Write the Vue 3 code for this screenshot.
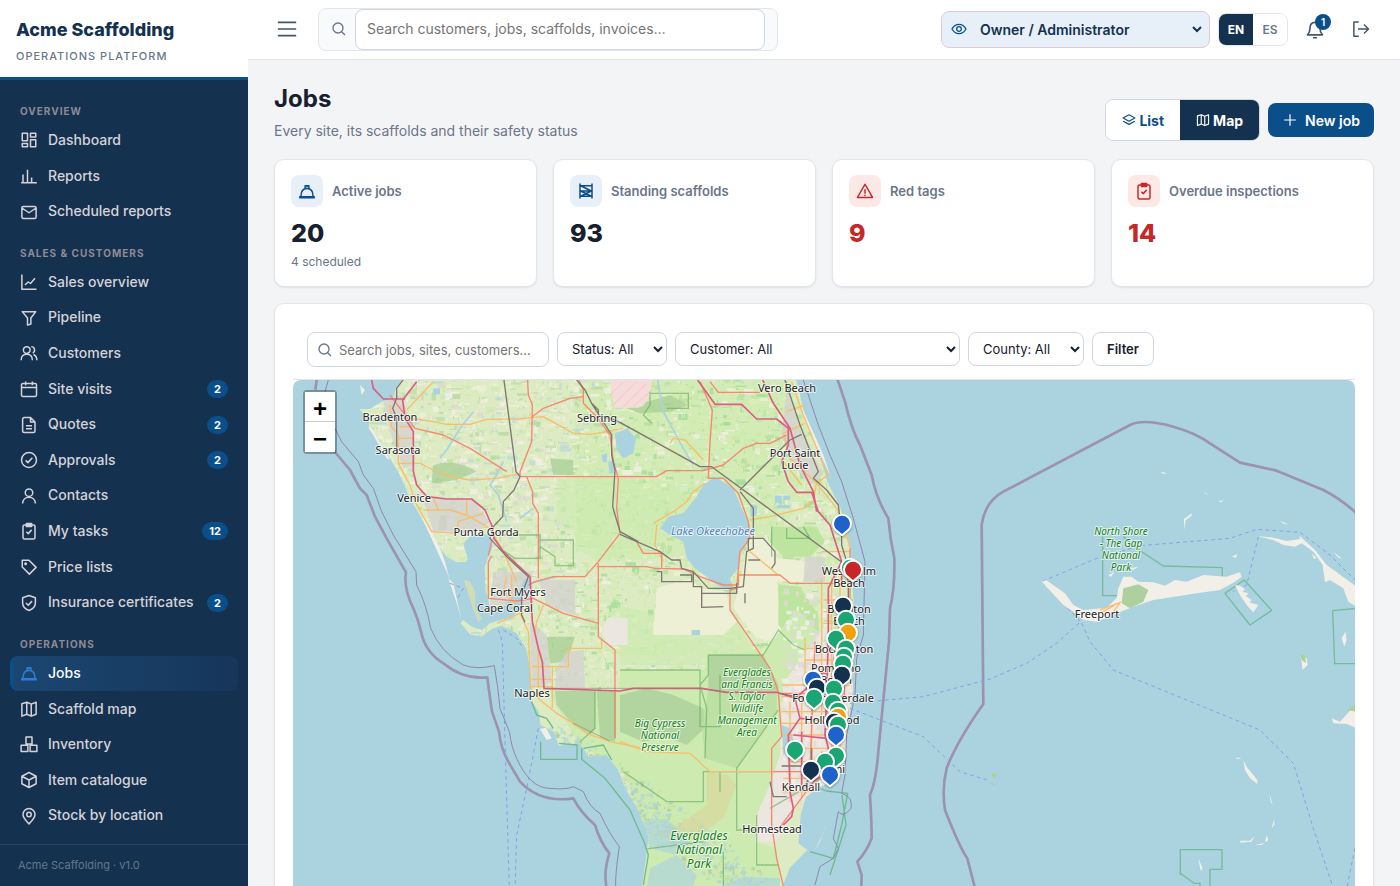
<script setup>
const icons = {
  dashboard: 'M3 3h7v10H3zM14 3h7v5h-7zM3 16.500h7V21H3zM14 11.500h7V21h-7z',
  bars: 'M1.500 21h21M4 21V10M10 21V3.500M15.500 21v-7M20 21v-1',
  mail: 'M4.500 4.500h15a2 2 0 0 1 2 2v12a2 2 0 0 1-2 2h-15a2 2 0 0 1-2-2v-12a2 2 0 0 1 2-2zM3 7l9 6 9-6',
  trend: 'M2.500 2v19.500H22M6.500 16l4.500-4 3 2L20 7',
  funnel: 'M3 3.500h18L14.500 12v8L10 21.500V12z',
  users: 'M9 12.500a4.500 4.500 0 1 0 0-9 4.500 4.500 0 0 0 0 9zM1.500 21.500c0-5 3-8 7.500-8s7.500 3 7.500 8M15 3.500a4.500 4.500 0 0 1 2 8.500M18 14c3 1.500 4.500 4 4.500 7.500',
  calendar: 'M4 4.500h16a2 2 0 0 1 2 2V20a2 2 0 0 1-2 2H4a2 2 0 0 1-2-2V6.500a2 2 0 0 1 2-2zM2 10h20M7.500 2v5M16.500 2v5',
  file: 'M5.500 2H14l6 6v12a2 2 0 0 1-2 2H5.500a2 2 0 0 1-2-2V4a2 2 0 0 1 2-2zM14 2v6h6M8 13h8M8 17h8',
  check: 'M12 22a10 10 0 1 0 0-20 10 10 0 0 0 0 20zM7.500 12.500l3 3 6-6.500',
  user: 'M12 12.500a5 5 0 1 0 0-10 5 5 0 0 0 0 10zM3.500 22c0-5 3.500-8.500 8.500-8.500s8.500 3.500 8.500 8.500',
  task: 'M6 4h12a2 2 0 0 1 2 2v14.500a2 2 0 0 1-2 2H6a2 2 0 0 1-2-2V6a2 2 0 0 1 2-2zM8.500 2h7v4h-7zM9.500 4h5M8.500 13l2.500 2.500 4.500-5',
  tag: 'M3 3h9l9.500 9.500-9 9L3 12zM7.500 6.500a1 1 0 1 0 0 2 1 1 0 0 0 0-2z',
  shield: 'M12 2l8.500 3v7c0 5-3.500 8-8.500 10-5-2-8.500-5-8.500-10V5zM8 12l3 3 5-5.500',
  hat: 'M1.500 19.500h21M1.500 21h21M4 18.500c0-6 3-10 8-10s8 4 8 10M9.500 8.500V5h5v3.500M11 6h2',
  map: 'M2.500 5L9 3l6 2.500L21.500 3v16L15 21.500 9 19l-6.500 2.500zM9 3v16M15 5.500v16',
  boxes: 'M8 2.500h8V12H8zM1.500 13.500h9V22h-9zM13.500 13.500h9V22h-9z',
  cube: 'M12 2l9.500 5v10L12 22l-9.500-5V7zM2.500 7l9.500 5 9.500-5M12 12v10',
  pin: 'M12 22.500c-4-4-8-8-8-12.500a8 8 0 0 1 16 0c0 4.500-4 8.500-8 12.500zM12 7a3 3 0 1 0 0 6 3 3 0 0 0 0-6z',
  chart: 'M3 2.500V21h19M7 17v-5M12 17V8M17 17v-7',
  search: 'M10.500 18a7.500 7.500 0 1 0 0-15 7.500 7.500 0 0 0 0 15zM16 16l5 5',
  eye: 'M1.500 12c2.500-4.500 6-7 10.500-7s8 2.500 10.500 7c-2.500 4.500-6 7-10.500 7s-8-2.500-10.500-7zM12 8.500a3.500 3.500 0 1 0 0 7 3.500 3.500 0 0 0 0-7z',
  bell: 'M3 19h18c-2-2-3-4-3-8 0-4-2-7-6-7s-6 3-6 7c0 4-1 6-3 8zM9.500 22.500h5',
  exit: 'M9 2.500H2.500v19H9M8 12h14M16 6l6 6-6 6',
  layers: 'M12 3l10 5.500L12 14 2 8.500zM2 14l10 5.500L22 14',
  plus: 'M12 2v20M2 12h20',
  scaffold: 'M4 2v20M20 2v20M4 5h16M4 12h16M4 19h16M5 5l14 7M19 12L5 19M5 12l14 7',
  alert: 'M12 3l10 17.500H2zM12 9.500v6M12 17v1.500',
  menu: 'M1 4h22M1 12h22M1 20h22',
}
const sections = [
  { title: 'Overview', items: [['Dashboard', 'dashboard'], ['Reports', 'bars'], ['Scheduled reports', 'mail']] },
  { title: 'Sales & Customers', items: [['Sales overview', 'trend'], ['Pipeline', 'funnel'], ['Customers', 'users'], ['Site visits', 'calendar', 2], ['Quotes', 'file', 2], ['Approvals', 'check', 2], ['Contacts', 'user'], ['My tasks', 'task', 12], ['Price lists', 'tag'], ['Insurance certificates', 'shield', 2]] },
  { title: 'Operations', items: [['Jobs', 'hat'], ['Scaffold map', 'map'], ['Inventory', 'boxes'], ['Item catalogue', 'cube'], ['Stock by location', 'pin'], ['', 'chart']] },
]
const stats = [
  { label: 'Active jobs', value: '20', sub: '4 scheduled', icon: 'hat' },
  { label: 'Standing scaffolds', value: '93', icon: 'scaffold' },
  { label: 'Red tags', value: '9', icon: 'alert', red: true },
  { label: 'Overdue inspections', value: '14', icon: 'task', red: true },
]
const green = '#1aa672', blue = '#1f62c9', navy = '#14314f', amber = '#f0a30a', red = '#c62828'
const pins = [
  [842, 524, blue], [850, 568, green], [853, 570, red], [843, 606, navy], [846, 620, green], [848, 633, amber],
  [836, 639, green], [846, 649, green], [844, 657, green], [843, 664, green], [842, 675, navy], [813, 680, blue],
  [817, 688, navy], [834, 689, green], [814, 698, green], [833, 703, green], [838, 711, green], [838, 717, amber],
  [834, 722, navy], [838, 725, green], [836, 735, blue], [795, 750, green], [836, 756, green], [825, 762, green],
  [811, 770, navy], [830, 775, blue],
]
const places = [
  [['Bradenton'], 390, 421], [['Sarasota'], 398, 454], [['Venice'], 414, 502], [['Punta Gorda'], 486, 536],
  [['Fort Myers'], 518, 596], [['Cape Coral'], 505, 612], [['Naples'], 532, 697], [['Sebring'], 597, 422],
  [['Vero Beach'], 787, 392], [['Port Saint', 'Lucie'], 795, 457], [['West Palm', 'Beach'], 849, 575],
  [['Boynton', 'Beach'], 849, 613], [['Boca Raton'], 844, 653],
  [['Pompano', 'Beach'], 836, 672], [['Fort Lauderdale'], 833, 702], [['Hollywood'], 832, 724],
  [['Miami'], 829, 773], [['Kendall'], 801, 791], [['Homestead'], 772, 833], [['Freeport'], 1097, 618],
]
const parks = [
  [['Everglades', 'and Francis', 'S. Taylor', 'Wildlife', 'Management', 'Area'], 747, 676],
  [['Big Cypress', 'National', 'Preserve'], 660, 727],
  [['North Shore', '- The Gap', 'National', 'Park'], 1121, 535],
]

let seed = 20
const rnd = () => (seed = (seed * 16807) % 2147483647) / 2147483647
const pick = (list) => list[Math.floor(rnd() * list.length)]
const west = ['#f2efe9', '#eef0d5', '#cdebb0', '#f2efe9', '#eef0d5', '#c2dfa8', '#dcdad2', '#e4ecc6', '#b9d8a6', '#bcdcd6']
const east = ['#cdebb0', '#cdebb0', '#eef0d5', '#d9efb8', '#b8e09c', '#c9eaa5', '#f2efe9', '#a4dd9b', '#d6e8bd']
const patches = []
for (let i = 0; i < 7500; i++) {
  const x = Math.round(220 + rnd() * 1480)
  const y = Math.round(rnd() * 950)
  const s = rnd()
  const nearWest = x + y * 0.35 < 850 + rnd() * 260
  patches.push([x, y, Math.round(3 + s * s * s * 30), Math.round(3 + rnd() * rnd() * 20), pick(nearWest ? west : east)])
}
const suburbs = []
for (let i = 0; i < 320; i++) {
  suburbs.push([Math.round(1475 + rnd() * 210), Math.round(640 + rnd() * 640), Math.round(5 + rnd() * 16), Math.round(5 + rnd() * 16), rnd() > 0.5 ? '#dddbd9' : '#f2efe9'])
}
const marsh = []
for (let i = 0; i < 800; i++) {
  const t = rnd()
  marsh.push([Math.round(740 + t * 620 + rnd() * 90), Math.round(1030 + t * 470 + rnd() * 110), Math.round(3 + rnd() * 11), Math.round(3 + rnd() * 9), pick(['#aad3df', '#a6cf9a', '#aad3df', '#d6dfa0'])])
}
</script>

<template>
  <div class="shell">
    <aside class="sidebar">
      <div class="brand">
        <strong>Acme Scaffolding</strong>
        <span>Operations Platform</span>
      </div>
      <nav aria-label="Main">
        <section v-for="s in sections" :key="s.title">
          <h2>{{ s.title }}</h2>
          <a v-for="it in s.items" :key="it[0]" href="#" :class="{ active: it[0] === 'Jobs' }" :aria-label="it[0] || 'More'">
            <svg class="ico" viewBox="0 0 24 24" aria-hidden="true"><path :d="icons[it[1]]" /></svg>
            <span>{{ it[0] }}</span>
            <b v-if="it[2]">{{ it[2] }}</b>
          </a>
        </section>
      </nav>
      <footer>Acme Scaffolding · v1.0</footer>
    </aside>

    <div class="page">
      <header class="topbar">
        <button class="plain" aria-label="Toggle menu">
          <svg class="ico20" viewBox="0 0 24 24"><path :d="icons.menu" /></svg>
        </button>
        <div class="search">
          <svg class="ico16" viewBox="0 0 24 24" aria-hidden="true"><path :d="icons.search" /></svg>
          <input type="search" aria-label="Search" placeholder="Search customers, jobs, scaffolds, invoices…" />
        </div>
        <div class="tools">
          <div class="role">
            <svg class="ico16" viewBox="0 0 24 24" aria-hidden="true"><path :d="icons.eye" /></svg>
            <select aria-label="View as role"><option>Owner / Administrator</option></select>
          </div>
          <div class="lang">
            <button class="on">EN</button><button>ES</button>
          </div>
          <button class="plain bell" aria-label="Notifications">
            <svg class="ico20" viewBox="0 0 24 24"><path :d="icons.bell" /></svg>
            <span>1</span>
          </button>
          <button class="plain" aria-label="Sign out">
            <svg class="ico18" viewBox="0 0 24 24"><path :d="icons.exit" /></svg>
          </button>
        </div>
      </header>

      <main>
        <div class="heading">
          <div>
            <h1>Jobs</h1>
            <p>Every site, its scaffolds and their safety status</p>
          </div>
          <div class="actions">
            <div class="toggle">
              <button><svg class="ico14" viewBox="0 0 24 24" aria-hidden="true"><path :d="icons.layers" /></svg>List</button>
              <button class="on"><svg class="ico14" viewBox="0 0 24 24" aria-hidden="true"><path :d="icons.map" /></svg>Map</button>
            </div>
            <button class="primary"><svg class="ico14" viewBox="0 0 24 24" aria-hidden="true"><path :d="icons.plus" /></svg>New job</button>
          </div>
        </div>

        <div class="stats">
          <article v-for="s in stats" :key="s.label" :class="{ red: s.red }">
            <div class="stat-head">
              <i><svg class="ico18" viewBox="0 0 24 24" aria-hidden="true"><path :d="icons[s.icon]" /></svg></i>
              <span>{{ s.label }}</span>
            </div>
            <strong>{{ s.value }}</strong>
            <small v-if="s.sub">{{ s.sub }}</small>
          </article>
        </div>

        <div class="panel">
          <form class="filters" @submit.prevent>
            <div class="find">
              <svg class="ico16" viewBox="0 0 24 24" aria-hidden="true"><path :d="icons.search" /></svg>
              <input type="text" aria-label="Search jobs" placeholder="Search jobs, sites, customers…" />
            </div>
            <select class="w-status" aria-label="Status"><option>Status: All</option></select>
            <select class="w-customer" aria-label="Customer"><option>Customer: All</option></select>
            <select class="w-county" aria-label="County"><option>County: All</option></select>
            <button>Filter</button>
          </form>

          <div class="map">
            <svg class="canvas" viewBox="293 380 1062 560" role="img" aria-label="Map of job sites in South Florida">
              <defs>
                <clipPath id="land">
                  <path d="M345 0L318 40 308 70 275 80 240 102 208 102 238 135 236 162 262 190 300 250 330 300 360 370 395 430 430 495 470 545 500 562 535 560 520 505 548 478 600 478 608 515 584 575 586 640 598 690 632 705 690 640 702 610 722 615 700 660 690 705 665 725 600 745 575 765 545 755 520 735 512 745 540 778 575 785 605 762 635 752 680 775 708 820 720 880 722 975 745 1008 752 1050 792 1070 806 1112 870 1105 895 1145 950 1140 985 1185 1005 1240 1042 1300 1076 1385 1068 1450 1055 1540 1040 1800H1460L1478 1533 1500 1478 1552 1425 1525 1405 1532 1320 1548 1265 1590 1235 1640 1215 1662 1170 1672 1070 1686 970 1692 860 1698 770 1686 620 1680 510 1652 400 1612 320 1580 210 1542 110 1515 0z" />
                </clipPath>
              </defs>
              <rect x="293" y="380" width="1062" height="560" fill="#aad3df" />
              <g transform="translate(290 375) scale(.33333)">
                <g clip-path="url(#land)">
                  <rect width="1750" height="1800" fill="#dcebc2" />
                  <path d="M850 0H1500L1600 330 1400 520 1000 560 860 500z" fill="#d3ebb5" />
                  <rect v-for="(p, i) in patches" :key="i" :x="p[0]" :y="p[1]" :width="p[2]" :height="p[3]" :fill="p[4]" opacity=".8" />
                  <path d="M800 310H1060V340L1250 325 1110 430 1130 480 1090 520 1000 540 930 560 860 520 850 460 800 440z" fill="#cdebb0" opacity=".65" />
                  <path d="M990 690L1090 720H1330L1420 870H990z" fill="#cdebb0" opacity=".7" />
                  <path d="M1100 640L1200 610 1230 640 1310 650 1320 710 1340 740 1300 780H1090zM1380 480L1440 500 1460 550 1560 560 1540 620 1460 620 1470 700 1500 760 1460 800 1400 790 1330 700 1350 620zM1090 740H1290V780H1090z" fill="#eef0d5" />
                  <path d="M1445 455H1580L1605 500 1560 545 1480 545 1440 500zM1465 628L1530 635 1585 720 1588 790 1530 820 1465 750z" fill="#bde59f" />
                  <path d="M770 945H990V885H1250V835H1420L1520 700 1590 780 1545 830 1545 925 1470 985V1145L1445 1220 1440 1300 1400 1360 1395 1400 1460 1420 1500 1800H1030L1070 1440 1075 1385 1000 1190 870 1110z" fill="#cdebb0" />
                  <path d="M795 948H915V1060L900 1080 850 1050 800 990zM920 948H975V1100L930 1090zM1255 840H1420L1465 930V952H1310L1255 940zM990 960L1070 940 1150 960 1240 1000 1245 1060 1190 1110 1130 1085 1060 1100 990 1070z" fill="#add19e" opacity=".85" />
                  <path d="M1255 945H1460V1010L1340 1180 1245 1150 1235 1050z" fill="#b9dda3" opacity=".8" />
                  <path d="M770 785H855L830 860 780 865zM780 250L850 255V300H790zM430 270Q500 250 560 290L500 315 425 325zM450 420H470V465H445zM1010 100L1140 60 1195 90 1140 110 1050 115z" fill="#a9cf95" opacity=".75" />
                  <path d="M960 15H1085L1082 60 1060 92 1045 98H975L965 50z" fill="#f5dcda" />
                  <path d="M970 90L1040 20M1000 95L1070 25M1030 95L1085 45M960 60L1000 20" stroke="#eeb9b6" stroke-width="2" />
                  <path d="M280 80L330 60 370 150 375 270 340 280 300 170zM400 375L545 372 600 440 560 470 430 470zM610 590L725 590 730 690 600 690zM745 615H855V720L770 690zM720 740L770 780 785 920 725 940zM800 880L830 830 880 825 885 940 795 940zM1490 40L1530 160 1600 300 1560 330 1500 260 1475 180zM1545 545H1605V620H1540z" fill="#d5d2d0" opacity=".8" />
                  <path d="M950 730H1013V810H960L935 780zM1480 925L1590 770 1690 780 1670 1160 1590 1240 1520 1290 1460 1400 1400 1400 1400 1320 1440 1230 1470 1140z" fill="#ebe6df" />
                  <rect v-for="(p, i) in suburbs" :key="'s' + i" :x="p[0]" :y="p[1]" :width="p[2]" :height="p[3]" :fill="p[4]" opacity=".8" />
                  <rect v-for="(p, i) in marsh" :key="'m' + i" :x="p[0]" :y="p[1]" :width="p[2]" :height="p[3]" :fill="p[4]" opacity=".6" />
                  <path d="M1250 1190L1310 1200 1340 1230 1300 1330 1240 1370 1200 1400 1080 1380 1180 1340 1250 1290z" fill="#dbd49a" opacity=".6" />
                  <path d="M1060 1340L1130 1330 1200 1400 1160 1440 1080 1420zM1080 1480L1160 1440 1220 1500 1190 1600 1060 1600zM1300 1530L1360 1505 1470 1510V1600H1290z" fill="#aad3df" opacity=".65" />
                  <g fill="none" stroke="#5aa45a" stroke-opacity=".55" stroke-width="4">
                    <path d="M990 885H1230V1055H1290V900M1255 840H1420M1255 840V900L1230 930 1250 1000 1245 1150M1465 1005L1340 1180V1365H1400M1000 1190L1130 1280H1240V1190H1445M1290 1190V1250M1400 1320V1470H1465M1300 1430V1540L1200 1560M1620 1195L1440 1300M1445 455V545M1490 460V490H1560L1540 455M1420 840L1465 765 1510 810 1545 825" />
                    <path d="M625 480H750V550H675L630 520M745 495H850V572H795V545L750 515M1080 50V90L1060 120 1085 145M1080 55H1195V100H1130M915 945V1060L870 1100M975 945V1090M1005 1430L1240 1400" />
                  </g>
                </g>
                <g fill="#aad3df">
                  <path d="M1240 330L1275 305 1330 340 1355 400 1378 450 1375 490 1350 530 1345 580 1320 610 1330 640 1290 635 1255 610 1215 580 1190 550 1180 500 1140 480 1110 460 1135 425 1180 415 1220 365z" />
                  <path d="M975 175L1010 160 1038 190 1030 235 1000 250 980 225zM935 240L952 235 950 262 938 260zM955 260L975 255 970 295 958 297zM430 40H450V58H428zM1455 362H1475V384H1455zM1480 362H1500V375H1480zM1460 390H1500V400H1460zM1380 388L1402 392 1400 420 1382 425zM1205 765H1230V780H1205zM1475 1050L1500 1060 1515 1110 1480 1140z" />
                </g>
                <path d="M650 440L625 360 600 330 620 300 640 260M450 250L470 225 510 160 550 110M530 560L560 520 590 510 612 490M700 660L720 625 800 605M690 430L730 400M1100 0L1120 110 1180 220 1210 270" fill="none" stroke="#aad3df" stroke-width="5" />
                <path d="M522 615L540 620 556 650 555 700 575 730 565 742 545 690z" fill="#cfdcb8" />
                <path d="M235 155L245 160 300 255 290 250zM395 425L410 440 430 480 450 520 465 560 478 610 470 590 440 525zM475 610L490 625 500 670 515 735 505 700zM210 30L225 45 215 60zM1520 70L1535 95 1560 150 1600 240 1622 305 1592 240zM750 1062L768 1058 785 1090 770 1095zM1610 1345L1600 1375 1575 1425 1590 1400z" fill="#f2efe9" />

                <g fill="none" stroke-linejoin="round">
                  <g stroke="#f9bd6b" stroke-width="4">
                    <path d="M350 105L430 20M345 130L380 132 430 140 470 148H540L590 133 680 132 760 125 850 175 900 178 950 170 1000 160M325 265H390L430 285 480 305 540 315 620 310 690 295M300 90L305 155 325 180 325 265 360 330 375 380 425 470 500 475 505 440 580 415M400 405H480L530 420 600 460 640 530 680 620M430 370L445 405M530 375V420M330 155H375M325 190H370M650 605L640 650 680 690M620 745L690 715 715 770 722 940 750 975 800 1015 850 1045 890 1075 960 1100 1050 1118M725 875H835V820H935V790M787 875V1000M725 913H787M725 935H787M745 810V940M760 690L740 740 735 770M665 600V690" />
                    <path d="M1090 445L1150 410 1190 380 1210 350 1245 325M1140 205L1150 190 1185 195 1240 255M1380 435L1440 425 1540 400 1570 380 1580 320M1505 20L1540 120 1600 270 1615 300 1580 325 1640 400 1670 480 1680 520M1380 530L1465 600M1545 90L1490 110M1545 145L1480 175 1500 250 1580 325M1480 260L1535 330M1100 450L1095 510 1120 560M990 1100L1070 1130 1200 1135 1260 1190H1640" />
                    <path d="M1595 530H1680M1595 610V1030M1625 610V1180M1650 610V1130M1600 675H1690M1600 710H1685M1600 745H1685M1545 820H1680M1545 855H1680M1475 930H1680M1475 965H1680M1475 1010H1670M1475 1045H1670M1475 1080H1665M1475 1120H1665M1500 980V1280M1535 950V1270M1565 940V1220M1500 1160H1650M1480 1210H1600M1475 1250H1570M1545 790V930" />
                  </g>
                  <g stroke="#fa8670" stroke-width="4">
                    <path d="M712 0L715 60 727 90 725 200 690 290 690 305H1100L1130 287H1240L1300 270 1360 220 1400 205 1440 205 1490 180M727 125L760 100 840 70 880 65M860 0L880 45V85L920 125 960 180 970 260 985 310 980 400 990 475 925 560 885 605H790L735 620 715 630M300 60L375 160 460 180 540 220 650 290M710 305L728 350V385L745 415V610M595 540L605 500M605 545L595 560V670L680 678 730 670 820 715 925 745V785L975 825V1090M920 575H1070L1095 580 1180 582 1230 605 1300 630H1345V600H1470L1500 625H1640M1040 500L1060 535H1115V580M1230 20L1267 105 1260 200 1255 310 1300 310 1345 355 1375 440 1380 490 1350 530 1340 640 1320 645V705L1375 785 1440 880 1465 950 1475 1085 1445 1120V1350L1460 1450 1480 1533M1260 20L1285 52H1410M1450 1190H1540M1475 955H1580M925 565V745" />
                    <path d="M1680 520V700L1675 800 1665 900 1660 1060 1600 1180 1460 1370M1575 800L1560 1180" />
                  </g>
                  <g stroke="#dd5d82" stroke-width="5">
                    <path d="M245 15L250 40 280 72H345M380 20L338 75 345 130 370 170V290L380 330 410 365 470 372H545L585 405 605 450 612 490 640 530 720 605 727 740 745 820 757 860 762 940 990 948 1030 940H1235L1310 952H1460L1515 970 1530 1030 1495 1080 1500 1250 1510 1300 1505 1325 1480 1350" />
                    <path d="M1223 15L1275 88H1355L1400 132H1460L1495 160V210L1475 260 1495 320 1520 352H1565L1585 410 1620 450 1655 560 1615 640V780L1610 960 1605 1080 1630 1180 1570 1220M1418 15L1450 85 1500 160 1530 270 1570 350 1580 410M1655 560V620M1515 970L1550 940 1580 895H1615M1530 1030L1590 1035M1510 1080L1610 1090M1535 1070V1230" />
                  </g>
                  <g stroke="#807673" stroke-width="4">
                    <path d="M350 0L320 40V70L308 100 320 130V240M640 0L678 290 690 305 672 345 640 380 638 425 610 455 600 490 655 550 715 605 695 660V720L705 742M860 15L885 45 905 85 965 180 965 240 975 285 968 395 990 470 1045 500M905 85L925 105V120L975 135 1040 170M990 142L1230 275H1265L1660 565M1350 345L1500 195 1535 178M1485 15L1530 150 1585 290 1570 310 1610 345 1645 390 1655 475 1655 510 1670 560 1675 640V800L1650 960 1640 1100 1530 1250M990 478L1110 530 1145 555H1170L1175 580 1210 590V635H1235V697L1300 695M1210 590L1255 640H1320L1360 635 1370 530 1390 520V400L1350 350M1100 590H1115V620H1205V600H1170M1235 655H1340V625M1375 525H1375V490H1420L1455 530V565L1445 580M1375 555H1410M1365 655V685M1470 955L1545 970M1475 1173H1595V1130M1440 1220L1450 1265H1490M1565 1120V1180" />
                  </g>
                  <path d="M765 940H1230L1310 952H1410M850 1045L960 1098" stroke="#8c7f6d" stroke-width="3" opacity=".6" />
                  <path d="M752 1100V1153H861V1110L807 1105M875 1120V1153L945 1210 1020 1305 1062 1400 1075 1440 1060 1530M725 980L740 1020 770 1030 790 1060M880 1120L940 1110 965 1155" stroke="#6fb98f" stroke-width="4" />
                  <path d="M1590 1240L1610 1248 1673 1255 1655 1350 1630 1450 1560 1430M1656 1260L1668 1350 1620 1500" stroke="#6fb98f" stroke-width="4" />

                  <g stroke="#9b8fae" stroke-width="8" opacity=".95">
                    <path d="M82 0L76 45M130 225L180 285 210 340 230 360 255 425 290 490 348 592Q340 640 370 700 385 735 393 770 405 830 460 865 520 915 592 907 600 970 606 1010L627 1070Q632 1120 655 1160L690 1220Q750 1285 850 1270 870 1310 915 1350 930 1400 958 1435 940 1490 950 1540" />
                    <path d="M1638 0L1665 80Q1685 165 1710 210L1745 300Q1758 370 1795 430 1800 490 1813 550 1815 640 1800 700L1797 800 1765 1130Q1758 1220 1740 1260 1745 1340 1745 1390 1730 1430 1702 1460L1715 1500 1713 1560" />
                    <path d="M2055 1540L2032 1450Q2010 1420 1965 1305 1955 1240 1970 1180 2000 1100 2080 987L2075 450Q2085 380 2140 350L2520 150Q2560 130 2650 155 2720 175 2760 205L2850 263 2960 287 3100 345Q3150 370 3200 415" />
                  </g>
                  <g stroke="#8f86ae" stroke-width="3">
                    <path d="M115 15L105 50M135 160L155 200 205 260 220 300 250 340 275 410 310 480 378 590 380 630Q410 690 422 760 450 830 520 870 560 885 613 872 625 940 630 1000L658 1070Q665 1120 680 1150 720 1240 780 1240 830 1245 850 1235L880 1250Q900 1300 930 1315 960 1380 988 1415 975 1500 977 1540M1540 15L1585 150 1620 240 1655 320 1690 430 1725 560 1720 780 1700 850 1695 960 1670 1080 1665 1200 1655 1255Q1690 1265 1683 1300 1660 1330 1645 1310L1630 1390 1645 1420 1630 1450 1590 1475 1575 1530" />
                  </g>
                  <g stroke="#849fe9" stroke-width="3" stroke-dasharray="11 10">
                    <path d="M625 765L637 800 645 1100 658 1540M745 1060L710 1240 680 1380 675 1540M480 625L520 640 500 675M640 765L680 790 700 820M1680 985L1900 965 2100 912 2210 865 2300 805 2372 740 2255 620 2420 550 2550 512 2820 490 2900 463 3030 472 3120 540 3200 620M1680 1000L1900 1085 2010 1190 2090 1215M2375 745L2400 800 2470 885 2910 1065 3010 1165 3070 1360 3130 1540M3195 1420L3170 1540M2905 485L2870 630 2830 650" />
                  </g>
                  <g stroke="#76bb9b" stroke-width="4">
                    <path d="M2438 485V662H2485L2490 645 2510 626H2580L2620 635H2700L2720 624 2797 628V578L2620 573 2540 520 2500 485M2805 655L2863 615 2945 706 2880 750zM3200 700L3128 707 3134 866H3200M2671 1500V1424H2796V1483H2760V1540M2671 1495L2712 1525H2730V1540" />
                  </g>
                </g>
                <g fill="#f2efe9">
                  <path d="M2255 620L2268 615 2325 655 2350 690 2380 705 2450 698 2480 668 2485 640 2500 605 2525 605 2545 620 2590 622 2625 632 2655 615 2690 620 2740 600 2810 605 2850 592 2855 605 2835 620 2790 645 2720 655 2590 675 2530 695 2480 715 2420 740 2380 735 2350 710 2320 690z" />
                  <path d="M2835 630L2850 632 2865 642 2858 650 2875 655 2868 664 2885 675 2878 682 2905 690 2890 712 2870 690 2850 660zM2900 483L2950 488 2990 498 3030 492 3028 482 3075 525 3110 570 3165 610 3200 635V695L3175 680 3160 640 3120 615 3105 622 3098 570 3070 530 3035 505 3015 515 2980 510 2950 495zM2683 465L2682 432 2705 415V422L2687 436zM2612 290L2632 295 2620 297zM2742 350L2758 362 2745 355zM2785 377H2803L2790 382zM2970 438L2995 448 2980 446zM3125 1030L3150 1040 3200 985V1060L3170 1047 3130 1045zM2860 1155L2870 1175 2890 1200 2902 1215V1227L2880 1210 2865 1185zM2835 1148H2855L2845 1152zM2850 1397H2880L2893 1383 2885 1400 2852 1403zM2895 1410L2925 1403 2930 1380 2935 1395 2915 1410zM2945 1360L2953 1330V1350zM2938 1255L2948 1290 2942 1280zM2725 1450L2738 1480 2732 1488zM3030 840L3050 850 3053 870 3038 885 3035 860zM3155 790L3166 770 3170 795 3163 815zM2825 545L2842 537 2838 548zM3065 535L3080 550 3072 552zM3130 530L3155 550 3145 548zM2455 600L2475 590 2462 606zM2520 580L2545 575 2530 585z" />
                  <path d="M2500 640L2545 628 2575 645 2560 680 2520 700 2495 685zM3030 840H3045L3048 865 3035 855zM3170 1005L3200 985V1010zM2110 1190L2122 1200 2112 1210 2105 1200zM2090 1220L2118 1227 2110 1230z" fill="#add19e" />
                  <path d="M2430 705L2490 683 2470 710M2430 715L2475 690" fill="none" stroke="#f9bd6b" stroke-width="4" />
                </g>
              </g>

              <g class="place">
                <text v-for="(p, i) in places" :key="i">
                  <tspan v-for="(l, j) in p[0]" :key="j" :x="p[1]" :y="p[2] + j * 12">{{ l }}</tspan>
                </text>
              </g>
              <text class="lake" x="713" y="535">Lake Okeechobee</text>
              <g class="park">
                <text v-for="(p, i) in parks" :key="i">
                  <tspan v-for="(l, j) in p[0]" :key="j" :x="p[1]" :y="p[2] + j * 12">{{ l }}</tspan>
                </text>
                <text class="big"><tspan x="699" y="840">Everglades</tspan><tspan x="699" y="854">National</tspan><tspan x="699" y="868">Park</tspan></text>
              </g>
              <g class="pins">
                <path v-for="(p, i) in pins" :key="i" :transform="`translate(${p[0]} ${p[1]})`" :fill="p[2]" d="M-6 5A8 8 0 1 1 6 5L0 10z" />
              </g>
            </svg>
            <div class="zoom">
              <button aria-label="Zoom in">+</button>
              <button aria-label="Zoom out">−</button>
            </div>
          </div>
        </div>
      </main>
    </div>
  </div>
</template>

<style>
body { margin: 0; background: #f3f4f6; }
</style>

<style scoped>
* { box-sizing: border-box; }
.shell { display: grid; grid-template-columns: 248px minmax(0, 1fr); height: 100vh; overflow: hidden; font-family: Inter, "Liberation Sans", sans-serif; font-size: 14px; color: #16202e; }
button, input, select { font-family: inherit; }
button { cursor: pointer; }
svg { flex: none; display: block; }
.ico, .ico14, .ico16, .ico18, .ico20 { fill: none; stroke: currentColor; stroke-width: 2; stroke-linejoin: round; }
.ico, .ico18 { width: 18px; height: 18px; }
.ico14 { width: 14px; height: 14px; }
.ico16 { width: 16px; height: 16px; }
.ico20 { width: 20px; height: 20px; }

.sidebar { display: flex; flex-direction: column; min-height: 0; background: #14314f; }
.brand { padding: 18px 16px 13px; background: #fff; border-bottom: 3px solid #0b4f8a; color: #14314f; display: grid; gap: 7px; }
.brand strong { font-size: 18px; line-height: 24px; font-weight: 800; }
.brand span { font-size: 11px; line-height: 15px; font-weight: 500; letter-spacing: 1px; text-transform: uppercase; color: #6b7689; }
nav { flex: 1; min-height: 0; overflow: hidden; padding: 8px 10px; }
nav h2 { margin: 0; padding: 16px 10px 4px; font-size: 10px; line-height: 15px; font-weight: 700; letter-spacing: 1px; text-transform: uppercase; color: #8f8a94; }
nav a { display: flex; align-items: center; gap: 10px; margin-bottom: 1px; padding: 8px 10px 8px 7px; border-left: 3px solid transparent; border-radius: 8px; font-size: 14px; line-height: 1.33; font-weight: 500; color: #d6d3d8; text-decoration: none; min-height: 34px; }
nav a span { flex: 1; }
nav a.active { color: #fff; background: linear-gradient(90deg, #1b4671, #16365a); border-left-color: #0b4f8a; }
nav a.active svg { color: #2c7fd6; }
nav b { padding: 0 7px; border-radius: 9px; background: #0b4f8a; color: #fff; font-size: 11px; line-height: 18px; font-weight: 700; }
.sidebar footer { padding: 12px 18px; border-top: 1px solid #2a455f; font-size: 11px; line-height: 17px; color: #64788c; }

.page { display: flex; flex-direction: column; min-width: 0; min-height: 0; }
.topbar { flex: none; display: flex; align-items: center; height: 60px; padding: 0 30px 1px 29px; background: #fff; border-bottom: 1px solid #e2e6eb; }
.plain { display: grid; place-items: center; padding: 0; border: 0; background: none; color: #475569; }
.search { display: flex; align-items: center; gap: 8px; width: 460px; margin-left: 21px; padding: 0 12px; border: 1px solid #e2e6eb; border-radius: 8px; background: #f8fafc; color: #6b7689; }
.search input { flex: 1; min-width: 0; height: 41px; padding: 0 11px 1px; border: 1px solid #d0d7e2; border-radius: 8px; font-size: 14px; background: #fff; }
.tools { display: flex; align-items: center; margin-left: auto; }
.role { display: flex; align-items: center; width: 269px; padding: 0 4px 0 9px; border: 1px solid #e3c9d2; border-radius: 8px; background: #e7f0f9; color: #0b4f8a; }
.role select { flex: 1; height: 35px; margin-left: 3px; padding: 0 6px; border: 0; background: transparent; color: #14314f; font-size: 14px; font-weight: 600; }
.lang { display: flex; margin: 0 17px 0 8px; border: 1px solid #e2e6eb; border-radius: 8px; overflow: hidden; }
.lang button { width: 34px; height: 31px; padding: 0; border: 0; background: #fff; color: #6b7689; font-size: 12px; font-weight: 600; }
.lang .on { background: #14314f; color: #fff; font-weight: 700; }
.bell { position: relative; margin-right: 27px; }
.bell span { position: absolute; top: -5px; right: -6px; width: 16px; height: 16px; border-radius: 8px; background: #0b4f8a; color: #fff; font-size: 10px; line-height: 16px; font-weight: 600; }

main { flex: 1; min-height: 0; overflow-y: auto; scrollbar-width: none; padding: 23px 26px; }
.heading { display: flex; justify-content: space-between; align-items: flex-end; margin-bottom: 18px; }
h1 { margin: 0 0 6px; font-size: 24px; line-height: 32px; font-weight: 700; }
.heading p { margin: 0; padding-bottom: 1px; font-size: 14px; line-height: 19px; color: #6b7689; }
.actions { display: flex; align-items: center; gap: 8px; }
.toggle { display: flex; border: 1px solid #d0d7e2; border-radius: 8px; overflow: hidden; }
.toggle button { display: flex; align-items: center; gap: 3px; height: 40px; padding: 0 16px; border: 0; background: #fff; color: #0b4f8a; font-size: 14px; font-weight: 700; }
.toggle .on { background: #14314f; color: #fff; }
.primary { display: flex; align-items: center; gap: 8px; height: 34px; padding: 0 14px 0 15px; border: 0; border-radius: 8px; background: #0b4f8a; color: #fff; font-size: 14px; font-weight: 600; }

.stats { display: grid; grid-template-columns: repeat(4, 1fr); gap: 16px; margin-bottom: 16px; }
.stats article { display: flex; flex-direction: column; min-height: 128px; padding: 15px 16px; border: 1px solid #e2e6eb; border-radius: 10px; background: #fff; box-shadow: 0 1px 2px rgba(20, 49, 79, .1); }
.stat-head { display: flex; align-items: center; gap: 9px; font-size: 13px; font-weight: 600; color: #6b7689; }
.stat-head i { display: grid; place-items: center; width: 32px; height: 32px; border-radius: 8px; background: #e7f0f9; color: #0b4f8a; }
.stat-head span { line-height: 16px; }
.stats strong { margin-top: 10px; font-size: 25px; line-height: 32px; font-weight: 800; }
.stats small { margin-top: 5px; font-size: 12px; line-height: 16px; color: #6b7689; }
.red .stat-head i { background: #fde8e8; color: #c62828; }
.red strong { color: #c62828; }

.panel { padding: 14px 18px; border: 1px solid #e2e6eb; border-radius: 10px; background: #fff; box-shadow: 0 1px 2px rgba(20, 49, 79, .1); }
.filters { display: flex; align-items: flex-start; gap: 8px; padding: 14px 14px 12px; border-bottom: 1px solid #e2e6eb; }
.find { display: flex; align-items: center; gap: 6px; width: 242px; height: 35px; padding: 0 9px; border: 1px solid #d0d7e2; border-radius: 8px; color: #6b7689; }
.find input { flex: 1; min-width: 0; padding: 0; border: 0; outline: 0; font-size: 13px; }
.filters select, .filters button { height: 34px; border: 1px solid #d0d7e2; border-radius: 8px; background: #fff; color: #16202e; font-size: 13px; }
.filters select { padding: 0 10px; }
.filters button { padding: 0 14px; font-weight: 600; }
.w-status { width: 110px; }
.w-customer { width: 285px; }
.w-county { width: 116px; }

.map { position: relative; border-radius: 8px; overflow: hidden; }
.canvas { width: 100%; height: auto; }
.canvas text { font-family: "Noto Sans", sans-serif; font-size: 11px; text-anchor: middle; paint-order: stroke; stroke: #fff; stroke-opacity: .7; stroke-width: 2px; stroke-linejoin: round; fill: #222; }
.canvas .lake { fill: #4f80bd; font-style: italic; }
.canvas .park text { fill: #108010; font-style: italic; font-size: 10px; }
.canvas .park .big { font-size: 12px; }
.pins path { stroke: #fff; stroke-width: 4px; stroke-linejoin: round; paint-order: stroke; filter: drop-shadow(0 1px 1px rgba(0, 0, 0, .35)); }
.zoom { position: absolute; top: 10px; left: 10px; border: 2px solid rgba(0, 0, 0, .3); border-radius: 4px; background-clip: padding-box; }
.zoom button { display: block; width: 30px; height: 30px; padding: 2px 0 0; border: 0; background: #fff; color: #000; font: bold 24px/30px "Liberation Sans", sans-serif; }
.zoom button:first-child { border-bottom: 1px solid #ccc; }
</style>
